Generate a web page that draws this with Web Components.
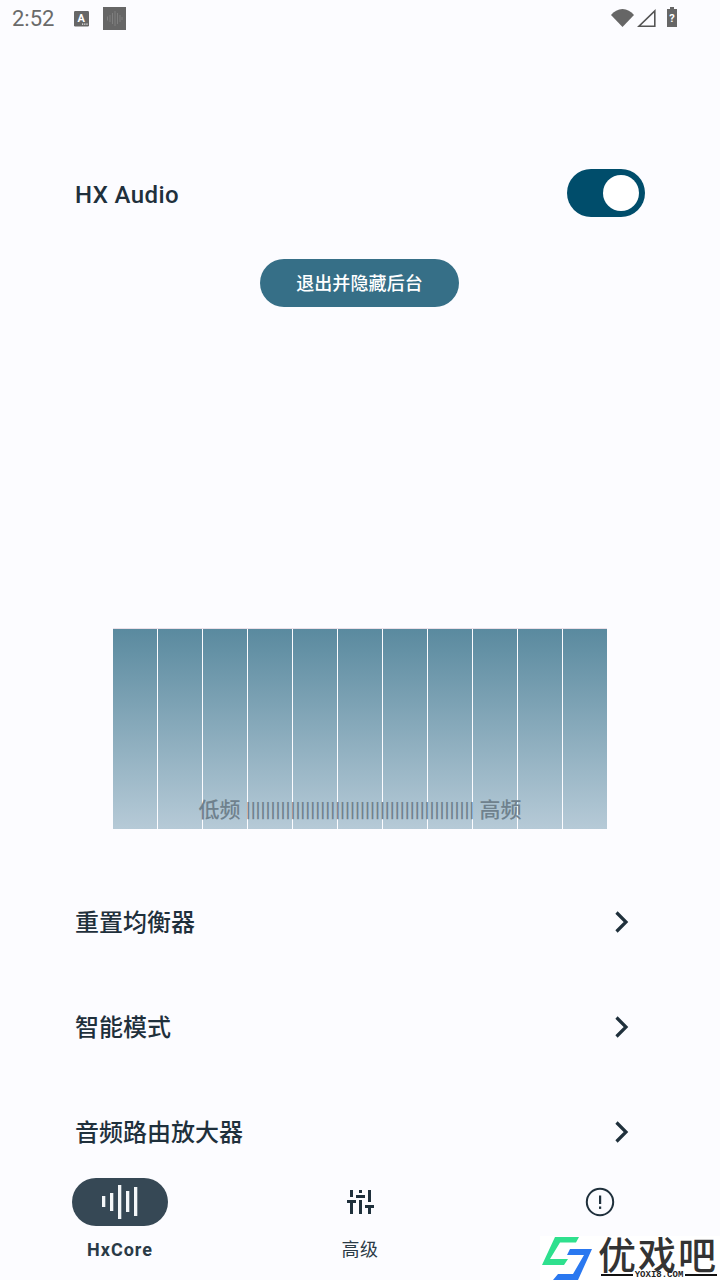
<!DOCTYPE html>
<html lang="zh"><head><meta charset="utf-8"><style>
html,body{margin:0;padding:0;background:#fcfcff}
body{font-family:Roboto,"Noto Sans CJK SC",sans-serif;width:720px;height:1280px;overflow:hidden}
</style></head><body>
<app-shell>
<status-bar slot="status"></status-bar>
<power-row slot="main" label="HX Audio"></power-row>
<exit-button slot="main">退出并隐藏后台</exit-button>
<eq-panel slot="main"></eq-panel>
<menu-row slot="main">重置均衡器</menu-row>
<menu-row slot="main">智能模式</menu-row>
<menu-row slot="main">音频路由放大器</menu-row>
<nav-bar slot="nav"></nav-bar>
<site-mark slot="mark"></site-mark>
</app-shell>
<script>
function def(name,html){customElements.define(name,class extends HTMLElement{constructor(){super();this.attachShadow({mode:'open'}).innerHTML=html;}});}
def('app-shell',`<style>
:host{display:flex;flex-direction:column;width:720px;height:1280px;position:relative;overflow:hidden;background:#fcfcff}
.main{display:flex;flex-direction:column;height:1128px;overflow:hidden;flex:none}
</style><slot name="status"></slot><div class="main"><slot name="main"></slot></div><slot name="nav"></slot><slot name="mark"></slot>`);
def('status-bar',`<style>
:host{display:flex;align-items:flex-start;height:38px;flex:none;position:relative}
.t{font:400 22px/38px Roboto,sans-serif;color:#6a6a6a;margin-left:12px;width:62px}
svg{display:block}
.a{margin-top:11px}.w{margin-top:7px;margin-left:14px}
.sp{flex:1}
.wi{margin-top:9px}.si{margin-top:9px;margin-left:3px}.ba{margin-top:7px;margin-left:11px;margin-right:43px}
</style><span class="t">2:52</span>
<svg class="a" width="15" height="16" viewBox="0 0 15 16"><rect width="15" height="15.5" rx="1.2" fill="#666"/><text x="7.2" y="11" text-anchor="middle" font-family="Roboto" font-weight="700" font-size="11" fill="#fff">A</text><path d="M8 13.2h1.2M10.200 13.2h1.2M12.400 13.2h1.2" stroke="#eee" stroke-width="1.2"/></svg>
<svg class="w" width="23" height="23" viewBox="0 0 23 23"><rect width="23" height="23" fill="#666"/><path d="M4.500 9.500v4M7 8v7M9.500 6v11M12 4v15M14.500 6v11M17 8v7M19 10v3" stroke="#7f7f7f" stroke-width="1" fill="none"/></svg>
<span class="sp"></span>
<svg class="wi" width="23" height="18" viewBox="0 0 23 18"><path d="M0 6C3 2.500 7 0 11.500 0S20 2.500 23 6L11.500 18z" fill="#666"/></svg>
<svg class="si" width="19" height="18" viewBox="0 0 19 18"><path d="M17.800 2V17.200H2z" fill="none" stroke="#555" stroke-width="1.600"/></svg>
<svg class="ba" width="10" height="20" viewBox="0 0 10 20"><path d="M3 0h4v2H10v18H0V2h3z" fill="#666"/><text x="5" y="15" text-anchor="middle" font-family="Roboto" font-weight="700" font-size="11" fill="#fff">?</text></svg>`);
def('power-row',`<style>
:host{display:flex;align-items:center;justify-content:space-between;height:48px;margin:131px 75px 0 75px;flex:none}
.l{font:500 24px/28px Roboto,sans-serif;color:#1f303c;margin-top:4px;letter-spacing:.4px}
.s{width:78px;height:48px;border-radius:24px;background:#004d6b;display:flex;align-items:center;justify-content:flex-end;padding-right:6px;box-sizing:border-box}
.k{width:36px;height:36px;border-radius:50%;background:#fff}
</style><span class="l">HX Audio</span><span class="s"><span class="k"></span></span>`);
def('exit-button',`<style>
:host{display:flex;align-items:center;justify-content:center;width:199px;height:48px;margin:42px 0 0 260px;border-radius:24px;background:#366f87;color:#fff;font:500 18px/24px Roboto,"Noto Sans CJK SC",sans-serif;letter-spacing:.1px;flex:none;padding-top:1px;box-sizing:border-box}
</style><slot></slot>`);
def('eq-panel',`<style>
:host{display:block;position:relative;width:494px;height:200px;margin:322px 0 41px 113px;flex:none}
.bars{display:grid;grid-template-columns:repeat(11,44px);gap:1px;height:200px;box-shadow:0 -1px 0 #eadfe8}
.bars i{background:linear-gradient(#5a8a9f,#b6cad7)}
.lab{position:absolute;left:0;right:0;top:169px;text-align:center;white-space:nowrap;font:500 21px/24px Roboto,"Noto Sans CJK SC",sans-serif;color:#6f818d}
.p{font-size:20px;letter-spacing:0}
</style><div class="bars">${'<i></i>'.repeat(11)}</div><div class="lab">低频 <span class="p">${'|'.repeat(46)}</span> 高频</div>`);
def('menu-row',`<style>
:host{display:flex;align-items:center;justify-content:space-between;height:105px;padding:0 88px 0 75px;flex:none;color:#1f303c;font:500 24px/32px Roboto,"Noto Sans CJK SC",sans-serif}
svg{display:block;margin-bottom:2px}
</style><slot></slot><svg width="20" height="24" viewBox="0 0 20 24"><path d="M4.500 2.500 14 12l-9.500 9.500" fill="none" stroke="#1f303c" stroke-width="3.2"/></svg>`);
def('nav-bar',`<style>
:host{display:grid;grid-template-columns:repeat(3,240px);height:114px;flex:none}
.i{display:flex;flex-direction:column;align-items:center;padding-top:12px}
.p{width:96px;height:48px;border-radius:24px;display:flex;align-items:center;justify-content:center}
.on{background:#364855}
.l{margin-top:12px;font:400 18px/24px Roboto,"Noto Sans CJK SC",sans-serif;color:#2a3a46}
.z{letter-spacing:.5px}
.b{font-weight:700;letter-spacing:1px}
svg{display:block}
</style>
<div class="i"><div class="p on"><svg width="36" height="34" viewBox="0 0 36 34" fill="#f4f7f9"><rect x="0" y="11" width="3.300" height="11"/><rect x="8" y="8" width="3.300" height="18"/><rect x="16" y="0" width="3.300" height="34"/><rect x="24" y="6" width="3.300" height="21"/><rect x="32" y="2" width="3.300" height="29"/></svg></div><div class="l b">HxCore</div></div>
<div class="i"><div class="p"><svg width="27" height="24" viewBox="0 0 27 24" fill="#1f303c"><rect x="3" y="0" width="3" height="7"/><rect x="0" y="10" width="9" height="3"/><rect x="3" y="13" width="3" height="11"/><rect x="12" y="0" width="3" height="3"/><rect x="9" y="5" width="9" height="3"/><rect x="12" y="10" width="3" height="14"/><rect x="21" y="0" width="3" height="12"/><rect x="18" y="15" width="9" height="3"/><rect x="21" y="18" width="3" height="6"/></svg></div><div class="l z">高级</div></div>
<div class="i"><div class="p"><svg width="30" height="30" viewBox="0 0 30 30"><circle cx="15" cy="15" r="13.200" fill="none" stroke="#1f303c" stroke-width="2"/><rect x="14" y="8.500" width="2.200" height="8.500" fill="#1f303c"/><rect x="14" y="19.500" width="2.200" height="2.400" fill="#1f303c"/></svg></div></div>`);
def('site-mark',`<style>
:host{display:block;position:absolute;left:540px;top:1236px;width:180px;height:44px;background:#fff}
svg{position:absolute;left:0;top:0}
.n{position:absolute;left:58px;top:0;font:500 38px/33px "Noto Sans CJK SC",sans-serif;letter-spacing:2px;color:#333;white-space:nowrap}
.u{position:absolute;left:61px;right:3px;top:34px;height:10px;display:flex;align-items:center;gap:2px;font:700 9px/10px "Liberation Mono",monospace;color:#222;white-space:nowrap}
.u i{flex:1;height:2px;background:#111}
</style><svg width="60" height="44" viewBox="0 0 60 44"><path d="M15 1H39L36 6.500H20L10 23H28L24 29H2z" fill="#2fe08e"/><path d="M30 13H52L38 44H13L18 38H33L44 19H27z" fill="#2a78f0"/></svg><span class="n">优戏吧</span><div class="u"><i></i><span>YOXI8.COM</span><i></i></div>`);
</script></body></html>
